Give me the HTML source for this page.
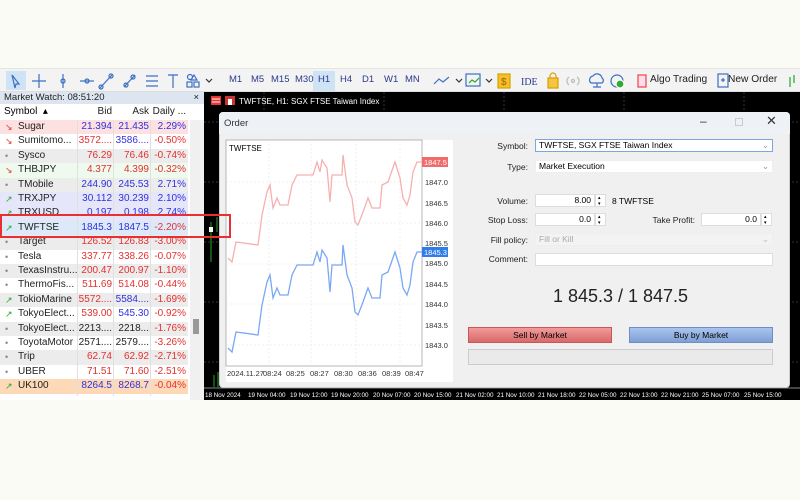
<!DOCTYPE html>
<html><head><meta charset="utf-8"><style>
*{margin:0;padding:0;box-sizing:border-box}
body{width:800px;height:500px;background:#fbfbf5;font-family:"Liberation Sans",sans-serif;position:relative;overflow:hidden;font-size:10px}
.a{position:absolute}
.tb{left:0;top:68px;width:800px;height:24px;background:#f3f3f3;border-top:1px solid #e4e4e4;border-bottom:1px solid #ddd}
.tf{position:absolute;top:5px;font-size:9.5px;color:#2a3a8a}
.mw{left:0;top:92px;width:204px;height:308px;background:#fff}
.row{position:absolute;left:0;width:188px;height:14.4px;font-size:10px;line-height:14.4px}
.row span{position:absolute;top:0}
.s{left:18px;color:#222}
.b{right:76px;text-align:right}
.k{right:39px;text-align:right}
.d{right:2px;text-align:right}
.ic{left:5px;font-size:9px}
.r{color:#e53030}.u{color:#3030e0}
.lbl{position:absolute;font-size:8.5px;color:#222;text-align:right}
.inp{position:absolute;background:#fff;border:1px solid #ddd;height:13px;font-size:8.5px;line-height:11px;padding:0 3px}
</style></head><body>
<div class="a tb">
 <div class="a" style="left:6px;top:2px;width:20px;height:19px;background:#cfe3f7"></div>
 <svg class="a" style="left:0;top:0" width="220" height="24" stroke="#3b6fc4" fill="none" stroke-width="1.2">
  <path d="M12 6 l7 9 -3 0 -1 4z"/><path d="M39 5v14M32 12h14"/><path d="M63 5v14"/><circle cx="63" cy="12" r="2"/>
  <path d="M80 12h14"/><circle cx="87" cy="12" r="2"/><path d="M100 19l12-13"/><circle cx="101" cy="18" r="2"/><circle cx="111" cy="7" r="2"/>
  <path d="M124 18l11-12"/><circle cx="126" cy="16" r="2"/><circle cx="133" cy="8" r="2"/><path d="M146 7h12M146 12h12M146 17h12"/>
  <path d="M168 6h10M173 6v13"/><circle cx="190" cy="8" r="2.5"/><rect x="187" y="13" width="5" height="5"/><rect x="194" y="13" width="5" height="5"/><path d="M194 6l3 5h-6z"/>
  <path d="M206 10l3 3 3-3" stroke="#333"/>
 </svg>
 <div class="a" style="left:313px;top:2px;width:22px;height:20px;background:#cfe3f7"></div>
 <span class="tf" style="left:229px">M1</span><span class="tf" style="left:251px">M5</span><span class="tf" style="left:271px">M15</span><span class="tf" style="left:295px">M30</span><span class="tf" style="left:318px">H1</span><span class="tf" style="left:340px">H4</span><span class="tf" style="left:362px">D1</span><span class="tf" style="left:384px">W1</span><span class="tf" style="left:405px">MN</span>
 <svg class="a" style="left:428px;top:0" width="372" height="24" fill="none" stroke-width="1.2">
  <path d="M6 15l5-5 4 3 6-5" stroke="#3b6fc4"/><path d="M28 10l3 3 3-3" stroke="#333"/>
  <rect x="38" y="5" width="14" height="12" stroke="#3b6fc4"/><path d="M41 14l3-3 3 2 4-4" stroke="#2a2"/><path d="M58 10l3 3 3-3" stroke="#333"/>
  <rect x="70" y="5" width="12" height="14" fill="#f3c12a" stroke="#d9a000"/><text x="73" y="16" font-size="10" fill="#a06000" stroke="none">$</text>
  <text x="93" y="16" font-size="10" fill="#2a3a8a" stroke="none" font-family="Liberation Serif">IDE</text>
  <path d="M120 9h10v10h-10z" fill="#f5c542" stroke="#d9a000"/><path d="M122 9v-2a3 3 0 0 1 6 0v2" stroke="#d9a000"/>
  <circle cx="145" cy="12" r="1.5" stroke="#bbb"/><path d="M141 8a5 5 0 0 0 0 8M149 8a5 5 0 0 1 0 8" stroke="#bbb"/>
  <path d="M163 14a4 4 0 0 1 2-7 5 5 0 0 1 9 2 3 3 0 0 1 0 5z M169 14v4M165 18h8" stroke="#3b6fc4"/>
  <circle cx="189" cy="12" r="6" stroke="#3b6fc4"/><circle cx="192" cy="15" r="4" fill="#3a3" stroke="#fff"/>
  <rect x="210" y="6" width="8" height="12" fill="#fde" stroke="#e44"/>
  <rect x="290" y="5" width="10" height="13" stroke="#3b6fc4"/><path d="M293 11h4M295 9v4" stroke="#3b6fc4"/>
  <path d="M362 8v10M366 6v8" stroke="#2a2"/>
 </svg>
 <span class="a" style="left:650px;top:5px;font-size:10.2px;color:#222">Algo Trading</span>
 <span class="a" style="left:728px;top:5px;font-size:10.2px;color:#222">New Order</span>
</div>

<div class="a mw">
 <div class="a" style="left:0;top:0;width:204px;height:12px;background:#dde6f0;font-size:9.5px;line-height:12px;padding-left:4px;color:#222">Market Watch: 08:51:20<span style="position:absolute;right:5px">×</span></div>
 <div class="row" style="top:12px;height:16px;line-height:16px;background:#fff;font-size:10px"><span style="left:4px">Symbol&nbsp; ▴</span><span class="b" style="color:#222">Bid</span><span class="k" style="color:#222">Ask</span><span class="d" style="color:#222">Daily ...</span></div>
 <div class="a" style="left:190px;top:28px;width:14px;height:280px;background:#f0f0f0"></div>
 <div class="a" style="left:193px;top:227px;width:6px;height:15px;background:#999"></div>
 <div class="a" style="left:0;top:28px;width:188px;height:262px">
  <div class="row" style="top:0;background:#fde0e0"><span class="ic r">↘</span><span class="s">Sugar</span><span class="b u">21.394</span><span class="k u">21.435</span><span class="d u">2.29%</span></div>
  <div class="row" style="top:14.4px;background:#fff"><span class="ic r">↘</span><span class="s">Sumitomo...</span><span class="b r">3572....</span><span class="k u">3586....</span><span class="d r">-0.50%</span></div>
  <div class="row" style="top:28.8px;background:#ececec"><span class="ic" style="color:#888">•</span><span class="s">Sysco</span><span class="b r">76.29</span><span class="k r">76.46</span><span class="d r">-0.74%</span></div>
  <div class="row" style="top:43.2px;background:#eefaee"><span class="ic r">↘</span><span class="s">THBJPY</span><span class="b r">4.377</span><span class="k r">4.399</span><span class="d r">-0.32%</span></div>
  <div class="row" style="top:57.6px;background:#ececec"><span class="ic" style="color:#888">•</span><span class="s">TMobile</span><span class="b u">244.90</span><span class="k u">245.53</span><span class="d u">2.71%</span></div>
  <div class="row" style="top:72px;background:#e6e6fa"><span class="ic" style="color:#2a2">↗</span><span class="s">TRXJPY</span><span class="b u">30.112</span><span class="k u">30.239</span><span class="d u">2.10%</span></div>
  <div class="row" style="top:86.4px;background:#e6e6fa"><span class="ic" style="color:#2a2">↗</span><span class="s">TRXUSD</span><span class="b u">0.197</span><span class="k u">0.198</span><span class="d u">2.74%</span></div>
  <div class="row" style="top:100.8px;background:#dbe9f8"><span class="ic" style="color:#2a2">↗</span><span class="s">TWFTSE</span><span class="b u">1845.3</span><span class="k u">1847.5</span><span class="d r">-2.20%</span></div>
  <div class="row" style="top:115.2px;background:#ececec"><span class="ic" style="color:#888">•</span><span class="s">Target</span><span class="b r">126.52</span><span class="k r">126.83</span><span class="d r">-3.00%</span></div>
  <div class="row" style="top:129.6px;background:#fff"><span class="ic" style="color:#888">•</span><span class="s">Tesla</span><span class="b r">337.77</span><span class="k r">338.26</span><span class="d r">-0.07%</span></div>
  <div class="row" style="top:144px;background:#ececec"><span class="ic" style="color:#888">•</span><span class="s">TexasInstru...</span><span class="b r">200.47</span><span class="k r">200.97</span><span class="d r">-1.10%</span></div>
  <div class="row" style="top:158.4px;background:#fff"><span class="ic" style="color:#888">•</span><span class="s">ThermoFis...</span><span class="b r">511.69</span><span class="k r">514.08</span><span class="d r">-0.44%</span></div>
  <div class="row" style="top:172.8px;background:#ececec"><span class="ic" style="color:#2a2">↗</span><span class="s">TokioMarine</span><span class="b r">5572....</span><span class="k u">5584....</span><span class="d r">-1.69%</span></div>
  <div class="row" style="top:187.2px;background:#fff"><span class="ic" style="color:#2a2">↗</span><span class="s">TokyoElect...</span><span class="b r">539.00</span><span class="k u">545.30</span><span class="d r">-0.92%</span></div>
  <div class="row" style="top:201.6px;background:#ececec"><span class="ic" style="color:#888">•</span><span class="s">TokyoElect...</span><span class="b" style="color:#222">2213....</span><span class="k" style="color:#222">2218...</span><span class="d r">-1.76%</span></div>
  <div class="row" style="top:216px;background:#fff"><span class="ic" style="color:#888">•</span><span class="s">ToyotaMotor</span><span class="b" style="color:#222">2571....</span><span class="k" style="color:#222">2579....</span><span class="d r">-3.26%</span></div>
  <div class="row" style="top:230.4px;background:#ececec"><span class="ic" style="color:#888">•</span><span class="s">Trip</span><span class="b r">62.74</span><span class="k r">62.92</span><span class="d r">-2.71%</span></div>
  <div class="row" style="top:244.8px;background:#fff"><span class="ic" style="color:#888">•</span><span class="s">UBER</span><span class="b r">71.51</span><span class="k r">71.60</span><span class="d r">-2.51%</span></div>
  <div class="row" style="top:259.2px;background:#fdd9b8"><span class="ic" style="color:#2a2">↗</span><span class="s">UK100</span><span class="b u">8264.5</span><span class="k u">8268.7</span><span class="d r">-0.04%</span></div>
 </div>
 <div class="a" style="left:77px;top:28px;width:1px;height:276px;background:#e0e0e0"></div>
 <div class="a" style="left:113px;top:28px;width:1px;height:276px;background:#e0e0e0"></div>
 <div class="a" style="left:150px;top:28px;width:1px;height:276px;background:#e0e0e0"></div>
</div>

<div class="a" style="left:204px;top:92px;width:596px;height:308px;background:#000"></div>
<svg class="a" style="left:204px;top:92px" width="596" height="308">
 <g stroke="#333" stroke-dasharray="2 2"><path d="M0 30h596M0 90h596M0 150h596M0 210h596M0 270h596M60 0v296M180 0v296M300 0v296M420 0v296M540 0v296"/></g>
 <rect x="7" y="4" width="10" height="9" fill="#e33"/><path d="M8 7h8M8 10h8" stroke="#fff"/>
 <rect x="21" y="4" width="10" height="9" fill="#c33"/><rect x="24" y="7" width="4" height="6" fill="#fff"/>
 <text x="35" y="12" fill="#fff" font-size="8" font-family="Liberation Sans">TWFTSE, H1:  SGX FTSE Taiwan Index</text>
 <path d="M7 130v40M13 125v15" stroke="#2a2"/><rect x="5" y="135" width="4" height="5" fill="#fff"/>
 <path d="M10 295v-12M14 295v-15" stroke="#2a2"/>
 <path d="M0 296h596" stroke="#888"/>
 <text y="305" fill="#fff" font-size="6.3" font-family="Liberation Sans"><tspan x="1">18 Nov 2024</tspan><tspan x="44">19 Nov 04:00</tspan><tspan x="86">19 Nov 12:00</tspan><tspan x="127">19 Nov 20:00</tspan><tspan x="169">20 Nov 07:00</tspan><tspan x="210">20 Nov 15:00</tspan><tspan x="252">21 Nov 02:00</tspan><tspan x="293">21 Nov 10:00</tspan><tspan x="334">21 Nov 18:00</tspan><tspan x="375">22 Nov 05:00</tspan><tspan x="416">22 Nov 13:00</tspan><tspan x="457">22 Nov 21:00</tspan><tspan x="498">25 Nov 07:00</tspan><tspan x="540">25 Nov 15:00</tspan></text>
</svg>

<div class="a" style="left:219px;top:112px;width:571px;height:276px;background:#f0f0f0;border:1px solid #ccc;border-radius:4px"></div>
<div class="a" style="left:219px;top:112px;width:571px;height:22px;background:#eef2f7;border-radius:4px 4px 0 0"></div>
<span class="a" style="left:224px;top:118px;font-size:9.5px;color:#333">Order</span>
<span class="a" style="left:700px;top:114px;font-size:12px;color:#333">–</span>
<div class="a" style="left:735px;top:118px;width:8px;height:8px;border:1px solid #ccc"></div>
<span class="a" style="left:766px;top:113px;font-size:13px;color:#333">✕</span>

<svg class="a" style="left:215px;top:135px" width="240" height="250" font-family="Liberation Sans">
 <rect x="11" y="5" width="227" height="242" fill="#fff"/>
 <rect x="11" y="5" width="196" height="226" fill="#fff" stroke="#999" stroke-width="0.7"/>
 <g stroke="#e4e4e4" stroke-dasharray="2 2" stroke-width="0.6"><path d="M11 47h196M11 88h196M11 129h196M11 169h196M11 210h196M54 5v226M96 5v226M141 5v226M185 5v226"/></g>
 <text x="14" y="16" font-size="8">TWFTSE</text>
 <polyline fill="none" stroke="#f7b0b0" stroke-width="1.3" points="13,123 17,127 21,107 43,110 47,80 52,57 55,50 58,73 62,63 65,70 73,70 77,50 82,40 98,40 102,27 105,37 107,25 112,33 115,67 117,40 127,40 128,20 132,50 137,63 140,87 143,90 148,77 153,63 157,73 165,73 167,50 173,47 180,27 185,43 188,63 192,70 195,60 198,37 202,27 207,27"/>
 <polyline fill="none" stroke="#7aa8f5" stroke-width="1.3" transform="translate(0,90)" points="13,123 17,127 21,107 43,110 47,80 52,57 55,50 58,73 62,63 65,70 73,70 77,50 82,40 98,40 102,27 105,37 107,25 112,33 115,67 117,40 127,40 128,20 132,50 137,63 140,87 143,90 148,77 153,63 157,73 165,73 167,50 173,47 180,27 185,43 188,63 192,70 195,60 198,37 202,27 207,27"/>
 <rect x="207" y="22" width="26" height="10" fill="#f26b6b"/><text x="209" y="30" font-size="7.5" fill="#fff">1847.5</text>
 <rect x="207" y="112" width="26" height="10" fill="#2f7de8"/><text x="209" y="120" font-size="7.5" fill="#fff">1845.3</text>
 <g font-size="7.5" fill="#333"><text x="210" y="50">1847.0</text><text x="210" y="71">1846.5</text><text x="210" y="91">1846.0</text><text x="210" y="111">1845.5</text><text x="210" y="131">1845.0</text><text x="210" y="152">1844.5</text><text x="210" y="172">1844.0</text><text x="210" y="193">1843.5</text><text x="210" y="213">1843.0</text>
 <text x="12" y="241">2024.11.27</text><text x="48" y="241">08:24</text><text x="71" y="241">08:25</text><text x="95" y="241">08:27</text><text x="119" y="241">08:30</text><text x="143" y="241">08:36</text><text x="167" y="241">08:39</text><text x="190" y="241">08:47</text></g>
</svg>

<div class="lbl" style="left:470px;width:58px;top:141px">Symbol:</div>
<div class="inp" style="left:535px;top:139px;width:238px;border-color:#7aa7e0">TWFTSE, SGX FTSE Taiwan Index<span style="position:absolute;right:3px;color:#999">⌄</span></div>
<div class="lbl" style="left:470px;width:58px;top:162px">Type:</div>
<div class="inp" style="left:535px;top:160px;width:238px;border-color:#eee">Market Execution<span style="position:absolute;right:3px;color:#999">⌄</span></div>
<div class="lbl" style="left:470px;width:58px;top:196px">Volume:</div>
<div class="inp" style="left:535px;top:194px;width:60px;text-align:right">8.00</div>
<div class="inp" style="left:595px;top:194px;width:11px;font-size:5px;line-height:6px;padding:0 2px">▴<br>▾</div>
<span class="a" style="left:612px;top:196px;font-size:8.5px">8 TWFTSE</span>
<div class="lbl" style="left:470px;width:58px;top:215px">Stop Loss:</div>
<div class="inp" style="left:535px;top:213px;width:60px;text-align:right">0.0</div>
<div class="inp" style="left:595px;top:213px;width:11px;font-size:5px;line-height:6px;padding:0 2px">▴<br>▾</div>
<div class="lbl" style="left:640px;width:55px;top:215px">Take Profit:</div>
<div class="inp" style="left:701px;top:213px;width:60px;text-align:right">0.0</div>
<div class="inp" style="left:761px;top:213px;width:11px;font-size:5px;line-height:6px;padding:0 2px">▴<br>▾</div>
<div class="lbl" style="left:470px;width:58px;top:235px">Fill policy:</div>
<div class="inp" style="left:535px;top:233px;width:238px;background:#f3f3f3;border-color:#eee;color:#aaa">Fill or Kill<span style="position:absolute;right:3px;color:#bbb">⌄</span></div>
<div class="lbl" style="left:470px;width:58px;top:254px">Comment:</div>
<div class="inp" style="left:535px;top:253px;width:238px"></div>
<div class="a" style="left:468px;top:286px;width:305px;text-align:center;font-size:18px;color:#222">1 845.3 / 1 847.5</div>
<div class="a" style="left:468px;top:327px;width:144px;height:16px;background:linear-gradient(#f29a9a,#d86a6a);border:1px solid #c55;text-align:center;font-size:8.5px;line-height:14px">Sell by Market</div>
<div class="a" style="left:629px;top:327px;width:144px;height:16px;background:linear-gradient(#a9c4ef,#7f9fd4);border:1px solid #6f8fc4;text-align:center;font-size:8.5px;line-height:14px">Buy by Market</div>
<div class="a" style="left:468px;top:349px;width:305px;height:16px;background:#eaeaea;border:1px solid #ccc"></div>

<div class="a" style="left:0;top:214px;width:231px;height:24px;border:2.5px solid #e83030"></div>
</body></html>
